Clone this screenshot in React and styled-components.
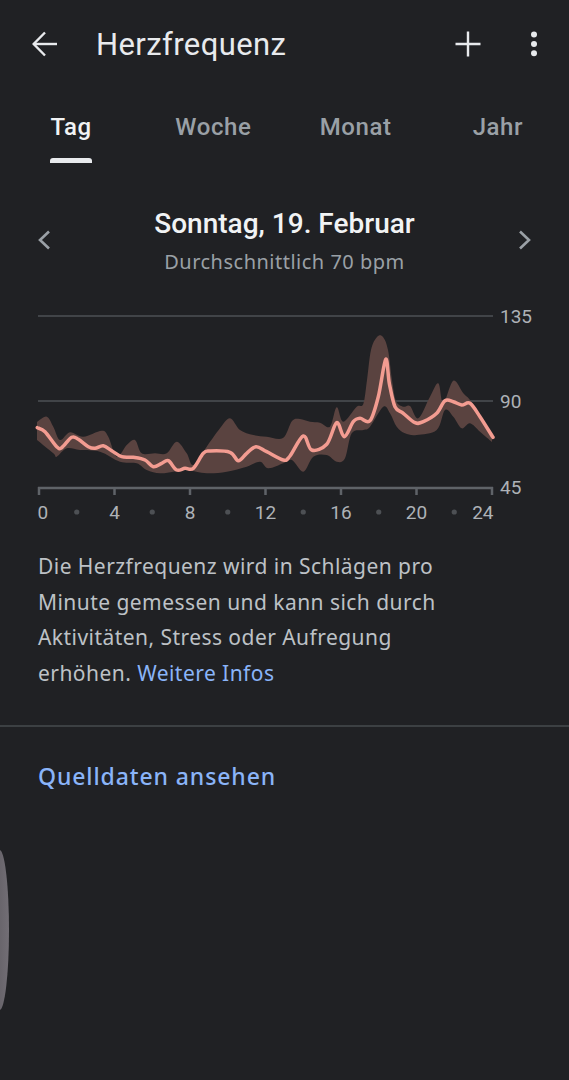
import React from "react";
import styled, { createGlobalStyle } from "styled-components";

const GlobalStyle = createGlobalStyle`
  html, body { margin: 0; padding: 0; background: #202124; }
  body { font-family: Roboto, "Noto Sans", sans-serif; -webkit-font-smoothing: antialiased; }
  * { box-sizing: border-box; }
`;

const Page = styled.div`
  position: relative;
  width: 569px;
  min-height: 1080px;
  background: #202124;
  color: #e8eaed;
  overflow: hidden;
`;

const AppBar = styled.header`
  display: flex;
  align-items: center;
  height: 88px;
  padding: 0 29px 0 32px;
`;

const IconButton = styled.button`
  display: flex;
  align-items: center;
  justify-content: center;
  padding: 0;
  border: 0;
  background: none;
  color: #e8eaed;
  width: ${(p) => p.$w || 26}px;
  height: 26px;
  margin-left: ${(p) => p.$ml || 0}px;
`;

const Title = styled.h1`
  margin: 0 0 0 38px;
  flex: 1;
  font-size: 31px;
  font-weight: 400;
  letter-spacing: 0.4px;
  color: #e8eaed;
`;

const Tabs = styled.nav`
  display: grid;
  grid-template-columns: repeat(4, 1fr);
  height: 75px;
`;

const Tab = styled.div`
  display: flex;
  flex-direction: column;
  align-items: center;
  padding-top: 25px;
`;

const TabLabel = styled.span`
  display: inline-flex;
  flex-direction: column;
  align-items: stretch;
  height: 100%;
  font-size: 24px;
  font-weight: 500;
  line-height: 28px;
  letter-spacing: 0.6px;
  color: ${(p) => (p.$active ? "#f1f3f4" : "#9aa0a6")};
`;

const Indicator = styled.span`
  margin-top: auto;
  height: 5px;
  border-radius: 3px 3px 0 0;
  background: ${(p) => (p.$active ? "#e8eaed" : "transparent")};
`;

const DateNav = styled.section`
  display: flex;
  align-items: flex-start;
  justify-content: space-between;
  padding: 44px 37px 0 37px;
`;

const DateText = styled.div`
  display: flex;
  flex-direction: column;
  align-items: center;
`;

const DateTitle = styled.div`
  font-size: 28px;
  font-weight: 500;
  line-height: 34px;
  color: #f1f3f4;
`;

const DateSub = styled.div`
  margin-top: 8px;
  font-family: "Noto Sans", Roboto, sans-serif;
  font-size: 20px;
  line-height: 26px;
  color: #9aa0a6;
  letter-spacing: 0.5px;
`;

const Chevron = styled.svg`
  width: 14px;
  height: 20px;
  margin-top: 23px;
`;

const ChartSvg = styled.svg`
  display: block;
  margin-top: 25px;
`;

const Description = styled.p`
  margin: 19px 0 0 0;
  padding: 0 95px 0 38px;
  font-family: "Noto Sans", Roboto, sans-serif;
  font-size: 21px;
  line-height: 35.5px;
  color: #bdc1c6;
  letter-spacing: 0.45px;
`;

const Link = styled.a`
  color: #8ab4f8;
  text-decoration: none;
`;

const Divider = styled.hr`
  margin: 34px 0 0 0;
  border: 0;
  height: 2px;
  background: #3c4043;
`;

const SourceLink = styled.a`
  display: block;
  margin: 34px 0 0 38px;
  font-family: "Noto Sans", Roboto, sans-serif;
  font-size: 23px;
  font-weight: 500;
  line-height: 30px;
  color: #8ab4f8;
  letter-spacing: 0.9px;
  text-decoration: none;
`;

const EdgeHandle = styled.div`
  position: absolute;
  left: -10px;
  top: 850px;
  width: 19px;
  height: 160px;
  border-radius: 50%;
  background: linear-gradient(90deg, #5e5b61, #726e75);
`;

const upper = [
  [37, 422], [46.7, 416.7], [53.3, 426.7], [60, 440], [70, 432.3], [83.3, 436.7],
  [101.7, 430.7], [108.3, 436.7], [116.7, 456.7], [126.7, 445], [135, 440],
  [141.7, 453.3], [155, 453.3], [166.7, 453.3], [176.7, 441.7], [186.7, 453.3],
  [193.3, 465], [206.7, 446.7], [220, 428.3], [230, 418.3], [240, 430],
  [253.3, 435], [266.7, 436.7], [283, 438], [292, 421], [300, 419], [310, 421.7],
  [320, 422.7], [330, 426.7], [336.7, 407.3], [343.3, 421.7], [356.7, 406.7],
  [363.3, 404], [367, 380], [371, 350], [377, 337], [383, 337], [388, 350],
  [392, 380], [396, 401], [403.3, 406.7], [410, 406], [418.3, 418.3], [430, 396.7],
  [438.3, 383.3], [443.3, 403.3], [453.3, 380.7], [463.3, 393.3], [470, 400],
  [480, 415], [492, 434],
];

const lower = [
  [37, 440], [53.3, 453.3], [56.7, 456.7], [66.7, 448.3], [80, 450], [100, 451.7],
  [120, 461.7], [136.7, 463.3], [146.7, 470], [160, 473.3], [173.3, 471.7],
  [186.7, 470], [206.7, 473.3], [226.7, 471.7], [246.7, 466.7], [260, 461.7],
  [268.3, 468.3], [283.3, 463.3], [292, 460], [303.3, 471.7], [313.3, 456.7],
  [326.7, 455], [336.7, 461.7], [345, 458.3], [351.7, 433.3], [363.3, 430],
  [370, 426.7], [383.3, 406.7], [390, 413.3], [396.7, 426.7], [405, 433.3],
  [416.7, 435], [436.7, 430], [445, 410], [453.3, 416.7], [461.7, 428.3],
  [470, 423.3], [480, 431.7], [492, 442],
];

const line = [
  [37.3, 427.7], [45, 431.7], [56.7, 446.7], [61.7, 447.7], [71.7, 437.3],
  [78.3, 439.3], [88.3, 446.7], [95, 448.3], [103.3, 445.7], [111.7, 450.7],
  [121.7, 456.7], [133.3, 457.3], [145, 460], [153.3, 466.7], [161.7, 463.3],
  [168.3, 460.7], [176.7, 470], [185, 468.3], [193.3, 468.3], [203.3, 453.3],
  [210, 451], [230, 452.3], [238.3, 460.7], [246.7, 453.3], [256, 446.7],
  [266.7, 451.7], [283.3, 460], [290, 456], [303.3, 436], [311.7, 450],
  [326.7, 444.3], [336.7, 422.7], [344.3, 436.7], [353.3, 421.7], [360, 418.3],
  [370, 420.7], [378.3, 396.7], [385.7, 359.3], [389.3, 383.3], [395, 406.7],
  [403.3, 413.3], [415, 422.7], [423.3, 421.7], [436.7, 413.3], [445, 400.7],
  [453.3, 401.7], [461.7, 405], [470, 403.3], [480, 416.7], [493, 437.3],
];

function smoothSegs(pts) {
  let d = "";
  for (let i = 0; i < pts.length - 1; i++) {
    const p0 = pts[i - 1] || pts[i];
    const p1 = pts[i];
    const p2 = pts[i + 1];
    const p3 = pts[i + 2] || p2;
    const c1x = p1[0] + (p2[0] - p0[0]) / 6;
    const c1y = p1[1] + (p2[1] - p0[1]) / 6;
    const c2x = p2[0] - (p3[0] - p1[0]) / 6;
    const c2y = p2[1] - (p3[1] - p1[1]) / 6;
    d += ` C${c1x.toFixed(1)},${c1y.toFixed(1)} ${c2x.toFixed(1)},${c2y.toFixed(1)} ${p2[0]},${p2[1]}`;
  }
  return d;
}

const linePath = `M${line[0][0]},${line[0][1]}` + smoothSegs(line);
const lowRev = [...lower].reverse();
const bandPath =
  `M${upper[0][0]},${upper[0][1]}` +
  smoothSegs(upper) +
  ` L${lowRev[0][0]},${lowRev[0][1]}` +
  smoothSegs(lowRev) +
  " Z";

const X0 = 39;
const X1 = 492;
const xh = (h) => X0 + (h * (X1 - X0)) / 24;

function Chart() {
  const hours = [0, 4, 8, 12, 16, 20, 24];
  const mids = [2, 6, 10, 14, 18, 22];
  return (
    <ChartSvg width="569" height="230" viewBox="0 300 569 230">
      <line x1="38" y1="316" x2="493" y2="316" stroke="#4d5054" strokeWidth="1.5" />
      <line x1="38" y1="401" x2="493" y2="401" stroke="#4d5054" strokeWidth="1.5" />
      <path d={bandPath} fill="#5a4340" />
      <path d={linePath} fill="none" stroke="#f39c91" strokeWidth="3.5" strokeLinejoin="round" strokeLinecap="round" />
      <line x1="38" y1="488" x2="493" y2="488" stroke="#5f6368" strokeWidth="2.5" />
      {hours.map((h) => (
        <line key={h} x1={xh(h)} y1="487" x2={xh(h)} y2="495" stroke="#5f6368" strokeWidth="2.5" />
      ))}
      {mids.map((h) => (
        <circle key={h} cx={xh(h)} cy="512" r="2.6" fill="#4d5054" />
      ))}
      {hours.map((h, i) => (
        <text
          key={h}
          x={i === 0 ? 37.5 : i === hours.length - 1 ? 493.5 : xh(h)}
          y="519"
          fontFamily="Roboto, sans-serif"
          fontSize="19"
          fill="#aeb2b7"
          textAnchor={i === 0 ? "start" : i === hours.length - 1 ? "end" : "middle"}
        >
          {h}
        </text>
      ))}
      {[
        ["135", 316],
        ["90", 401],
        ["45", 487],
      ].map(([t, y]) => (
        <text key={t} x="500" y={y + 7} fontFamily="Roboto, sans-serif" fontSize="19" fill="#aeb2b7">
          {t}
        </text>
      ))}
    </ChartSvg>
  );
}

export default function App() {
  const tabs = ["Tag", "Woche", "Monat", "Jahr"];
  return (
    <>
      <GlobalStyle />
      <Page>
        <AppBar>
          <IconButton aria-label="Zurück" $w={26}>
            <svg width="26" height="26" viewBox="0 0 26 26" fill="none" stroke="#e8eaed" strokeWidth="2.4">
              <path d="M1.5 13H25" />
              <path d="M13 1.5L1.7 13L13 24.5" />
            </svg>
          </IconButton>
          <Title>Herzfrequenz</Title>
          <IconButton aria-label="Hinzufügen" $w={26}>
            <svg width="26" height="26" viewBox="0 0 26 26" fill="none" stroke="#e8eaed" strokeWidth="2.4">
              <path d="M13 0.5V25.5M0.5 13H25.5" />
            </svg>
          </IconButton>
          <IconButton aria-label="Mehr" $w={12} $ml={47}>
            <svg width="12" height="26" viewBox="0 0 12 26" fill="#e8eaed">
              <circle cx="6" cy="3.5" r="3" />
              <circle cx="6" cy="13" r="3" />
              <circle cx="6" cy="22.3" r="3" />
            </svg>
          </IconButton>
        </AppBar>

        <Tabs>
          {tabs.map((t, i) => (
            <Tab key={t}>
              <TabLabel $active={i === 0}>
                {t}
                <Indicator $active={i === 0} />
              </TabLabel>
            </Tab>
          ))}
        </Tabs>

        <DateNav>
          <Chevron viewBox="0 0 14 20" fill="none" stroke="#9aa0a6" strokeWidth="2.6">
            <path d="M12 1.5L3 10L12 18.5" />
          </Chevron>
          <DateText>
            <DateTitle>Sonntag, 19. Februar</DateTitle>
            <DateSub>Durchschnittlich 70 bpm</DateSub>
          </DateText>
          <Chevron viewBox="0 0 14 20" fill="none" stroke="#9aa0a6" strokeWidth="2.6">
            <path d="M2 1.5L11 10L2 18.5" />
          </Chevron>
        </DateNav>

        <Chart />

        <Description>
          Die Herzfrequenz wird in Schlägen pro Minute gemessen und kann sich durch Aktivitäten, Stress oder Aufregung
          erhöhen. <Link href="#">Weitere Infos</Link>
        </Description>

        <Divider />

        <SourceLink href="#">Quelldaten ansehen</SourceLink>

        <EdgeHandle />
      </Page>
    </>
  );
}
